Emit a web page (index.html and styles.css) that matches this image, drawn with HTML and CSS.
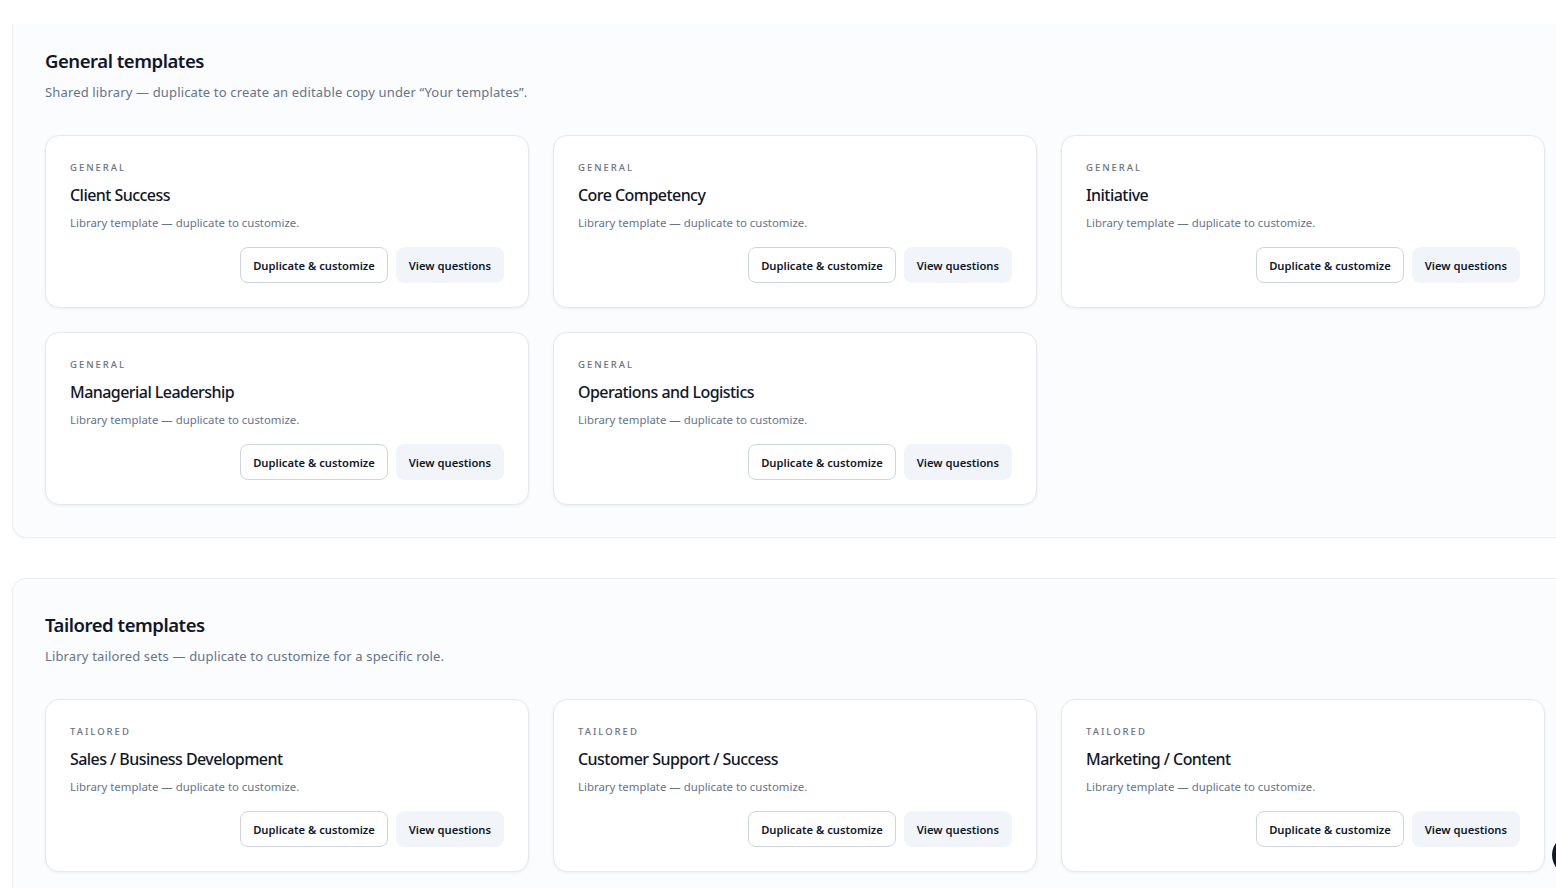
FILE: index.html
```html
<!DOCTYPE html>
<html lang="en">

<head>
    <title>Templates</title>
    <link rel="stylesheet" href="styles.css">
</head>

<body>

    <div class="topbar"></div>

    <main class="page">
        <section class="panel">
            <h2 class="panel-title">General templates</h2>
            <p class="panel-sub">Shared library — duplicate to create an editable copy under “Your templates”.</p>
            <div class="grid">
                <div class="card">
                    <div class="card-kind">General</div>
                    <h3 class="card-title">Client Success</h3>
                    <p class="card-desc">Library template — duplicate to customize.</p>
                    <div class="card-actions">
                        <button class="btn btn-outline">Duplicate &amp; customize</button>
                        <button class="btn btn-soft">View questions</button>
                    </div>
                </div>
                <div class="card">
                    <div class="card-kind">General</div>
                    <h3 class="card-title">Core Competency</h3>
                    <p class="card-desc">Library template — duplicate to customize.</p>
                    <div class="card-actions">
                        <button class="btn btn-outline">Duplicate &amp; customize</button>
                        <button class="btn btn-soft">View questions</button>
                    </div>
                </div>
                <div class="card">
                    <div class="card-kind">General</div>
                    <h3 class="card-title">Initiative</h3>
                    <p class="card-desc">Library template — duplicate to customize.</p>
                    <div class="card-actions">
                        <button class="btn btn-outline">Duplicate &amp; customize</button>
                        <button class="btn btn-soft">View questions</button>
                    </div>
                </div>
                <div class="card">
                    <div class="card-kind">General</div>
                    <h3 class="card-title">Managerial Leadership</h3>
                    <p class="card-desc">Library template — duplicate to customize.</p>
                    <div class="card-actions">
                        <button class="btn btn-outline">Duplicate &amp; customize</button>
                        <button class="btn btn-soft">View questions</button>
                    </div>
                </div>
                <div class="card">
                    <div class="card-kind">General</div>
                    <h3 class="card-title">Operations and Logistics</h3>
                    <p class="card-desc">Library template — duplicate to customize.</p>
                    <div class="card-actions">
                        <button class="btn btn-outline">Duplicate &amp; customize</button>
                        <button class="btn btn-soft">View questions</button>
                    </div>
                </div>
            </div>
        </section>

        <section class="panel">
            <h2 class="panel-title">Tailored templates</h2>
            <p class="panel-sub">Library tailored sets — duplicate to customize for a specific role.</p>
            <div class="grid">
                <div class="card">
                    <div class="card-kind">Tailored</div>
                    <h3 class="card-title">Sales / Business Development</h3>
                    <p class="card-desc">Library template — duplicate to customize.</p>
                    <div class="card-actions">
                        <button class="btn btn-outline">Duplicate &amp; customize</button>
                        <button class="btn btn-soft">View questions</button>
                    </div>
                </div>
                <div class="card">
                    <div class="card-kind">Tailored</div>
                    <h3 class="card-title">Customer Support / Success</h3>
                    <p class="card-desc">Library template — duplicate to customize.</p>
                    <div class="card-actions">
                        <button class="btn btn-outline">Duplicate &amp; customize</button>
                        <button class="btn btn-soft">View questions</button>
                    </div>
                </div>
                <div class="card">
                    <div class="card-kind">Tailored</div>
                    <h3 class="card-title">Marketing / Content</h3>
                    <p class="card-desc">Library template — duplicate to customize.</p>
                    <div class="card-actions">
                        <button class="btn btn-outline">Duplicate &amp; customize</button>
                        <button class="btn btn-soft">View questions</button>
                    </div>
                </div>
            </div>
        </section>
    </main>

    <button class="help-fab" aria-label="Help"></button>

</body>

</html>
```

FILE: styles.css
```css
html,
body {
    overflow: hidden;
}

body {
    font-family: "Noto Sans", "Open Sans", sans-serif;
    background-color: #fff;
    color: #0f172a;
    margin: 0;
}

.topbar {
    position: fixed;
    top: 0;
    left: 0;
    right: 0;
    height: 24px;
    background-color: #fff;
    z-index: 5;
}

.page {
    padding: 14px 12px 40px;
    display: flex;
    flex-direction: column;
    gap: 40px;
    width: 1566px;
}

.panel {
    background-color: #fbfcfd;
    border: 1px solid #eceef2;
    border-radius: 14px;
    padding: 32px;
    box-shadow: 0 1px 2px rgba(15, 23, 42, 0.04);
}

.panel-title {
    font-size: 18.5px;
    font-weight: 600;
    line-height: 28px;
    margin: 0;
    letter-spacing: -0.45px;
}

.panel-sub {
    font-size: 13px;
    line-height: 20px;
    color: #64748b;
    margin: 7px 0 0;
    letter-spacing: 0.15px;
}

.grid {
    display: grid;
    grid-template-columns: repeat(3, 484px);
    gap: 24px;
    margin-top: 33px;
}

.card {
    background-color: #fff;
    border: 1px solid #e6e8ec;
    border-radius: 14px;
    padding: 24px;
    box-shadow: 0 1px 3px rgba(15, 23, 42, 0.06);
}

.card-kind {
    font-size: 9.5px;
    font-weight: 500;
    letter-spacing: 2px;
    text-transform: uppercase;
    color: #6b7280;
    line-height: 14px;
    margin-top: 1px;
}

.card-title {
    font-size: 16px;
    font-weight: 500;
    line-height: 26px;
    margin: 7px 0 0;
    letter-spacing: -0.55px;
}

.card-desc {
    font-size: 11.4px;
    line-height: 18px;
    color: #64748b;
    margin: 6px 0 0;
}

.card-actions {
    display: flex;
    justify-content: flex-end;
    gap: 8px;
    margin-top: 15px;
}

.btn {
    font-family: inherit;
    font-size: 11.2px;
    font-weight: 600;
    color: #0f172a;
    height: 36px;
    padding: 0 12px;
    border-radius: 8px;
    cursor: pointer;
}

.btn-outline {
    background-color: #fff;
    border: 1px solid #cfd5dd;
}

.btn-soft {
    background-color: #f1f5f9;
    border: 1px solid #f1f5f9;
}

.help-fab {
    position: fixed;
    right: -38px;
    bottom: 12px;
    width: 42px;
    height: 42px;
    border-radius: 50%;
    border: none;
    background-color: #111827;
}
```
